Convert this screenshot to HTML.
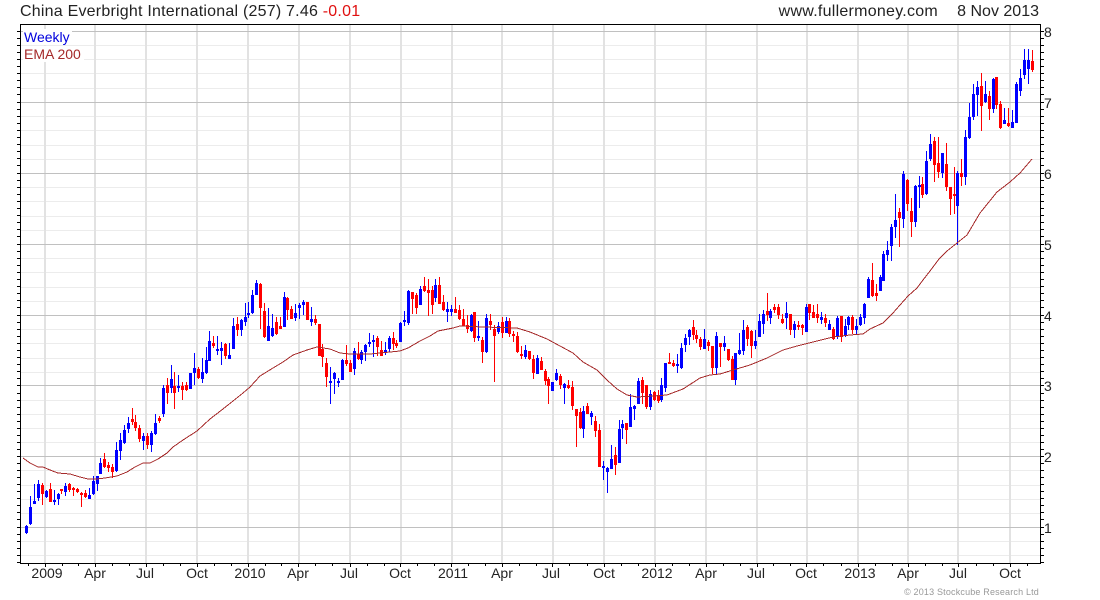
<!DOCTYPE html>
<html><head><meta charset="utf-8"><style>
html,body{margin:0;padding:0;background:#fff}
svg{display:block}
text{font-family:"Liberation Sans",Arial,sans-serif}
</style></head><body>
<svg xmlns="http://www.w3.org/2000/svg" width="1100" height="600" viewBox="0 0 1100 600">
<rect width="1100" height="600" fill="#fff"/>
<g shape-rendering="crispEdges" fill="none">
<path stroke="#ececec" d="M21 45.5H1040M21 59.5H1040M21 73.5H1040M21 88.5H1040M21 116.5H1040M21 130.5H1040M21 145.5H1040M21 159.5H1040M21 187.5H1040M21 201.5H1040M21 216.5H1040M21 230.5H1040M21 258.5H1040M21 272.5H1040M21 287.5H1040M21 301.5H1040M21 329.5H1040M21 343.5H1040M21 358.5H1040M21 372.5H1040M21 400.5H1040M21 414.5H1040M21 428.5H1040M21 442.5H1040M21 470.5H1040M21 485.5H1040M21 499.5H1040M21 513.5H1040M21 541.5H1040M21 555.5H1040"/>
<path stroke="#e2e2e2" stroke-width="2" d="M45 25V563M95 25V563M146 25V563M197 25V563M248 25V563M299 25V563M350 25V563M401 25V563M452 25V563M502 25V563M553 25V563M604 25V563M655 25V563M706 25V563M757 25V563M807 25V563M858 25V563M908 25V563M958 25V563M1010 25V563"/>
<path stroke="#c0c0c0" d="M21 31.5H1040M21 102.5H1040M21 173.5H1040M21 244.5H1040M21 315.5H1040M21 385.5H1040M21 456.5H1040M21 527.5H1040"/>
</g>
<rect x="23" y="29" width="49" height="16" fill="#fff"/>
<rect x="23" y="46" width="61" height="16" fill="#fff"/>
<g shape-rendering="crispEdges" fill="none" stroke="#ff0000">
<path stroke-width="1" d="M42.5 483V505M50.5 483V502M61.5 489V494M69.5 483V492M73.5 487V496M77.5 488V493M81.5 492V507M85.5 490V498M104.5 453V468M108.5 462V472M112.5 464V478M132.5 408V425M135.5 415V431M139.5 425V442M147.5 433V449M159.5 416V423M167.5 378V404M174.5 372V409M182.5 382V400M186.5 382V391M198.5 367V379M213.5 336V348M225.5 343V359M237.5 317V336M260.5 283V329M264.5 303V338M276.5 317V335M280.5 317V329M287.5 297V320M291.5 306V319M307.5 302V320M315.5 315V325M319.5 324V356M322.5 344V367M326.5 358V387M346.5 345V366M350.5 360V372M358.5 342V360M377.5 336V356M381.5 341V356M393.5 332V350M396.5 340V348M412.5 292V314M416.5 293V314M424.5 277V292M428.5 279V316M432.5 286V314M439.5 277V304M443.5 295V311M455.5 297V313M459.5 305V320M463.5 309V326M467.5 315V333M474.5 312V342M482.5 337V363M490.5 314V330M494.5 325V382M502.5 317V338M509.5 318V337M513.5 331V342M517.5 332V353M521.5 346V359M529.5 351V360M533.5 355V379M541.5 357V370M545.5 369V385M548.5 377V404M560.5 374V389M568.5 380V389M572.5 381V410M576.5 409V447M580.5 408V429M587.5 403V414M595.5 416V437M599.5 424V467M615.5 447V475M626.5 423V444M642.5 377V404M646.5 385V409M654.5 391V401M658.5 390V403M669.5 353V364M673.5 360V367M693.5 320V340M696.5 330V343M700.5 337V350M708.5 340V351M712.5 346V374M720.5 343V367M728.5 349V361M732.5 356V380M747.5 325V346M751.5 330V358M767.5 293V321M774.5 304V313M778.5 304V319M782.5 314V324M790.5 314V335M798.5 321V330M802.5 324V335M809.5 304V320M813.5 305V318M817.5 304V323M825.5 314V327M833.5 327V340M841.5 316V342M852.5 315V334M872.5 263V297M876.5 284V301M899.5 208V247M907.5 179V211M911.5 198V237M922.5 177V198M934.5 137V182M938.5 137V178M946.5 143V191M950.5 187V215M954.5 167V214M961.5 159V186M981.5 73V131M989.5 91V120M996.5 77V109M1000.5 101V129M1008.5 108V127M1032.5 50V72"/>
<path stroke-width="3" d="M42.5 485V494M50.5 489V502M61.5 489V491M69.5 484V490M73.5 488V490M77.5 489V492M81.5 493V495M85.5 493V497M104.5 459V467M108.5 465V468M112.5 467V472M132.5 419V422M135.5 422V428M139.5 428V439M147.5 436V445M159.5 418V421M167.5 385V393M174.5 386V393M182.5 386V390M186.5 385V390M198.5 369V378M213.5 343V346M225.5 344V356M237.5 324V330M260.5 284V308M264.5 311V337M276.5 322V334M280.5 326V329M287.5 298V310M291.5 309V319M307.5 302V320M315.5 319V323M319.5 324V356M322.5 349V357M326.5 363V377M346.5 360V364M350.5 363V372M358.5 354V359M377.5 338V347M381.5 350V356M393.5 338V344M396.5 343V346M412.5 292V299M416.5 295V308M424.5 286V291M428.5 290V293M432.5 290V305M439.5 285V304M443.5 302V310M455.5 309V313M459.5 310V319M463.5 319V326M467.5 325V329M474.5 312V338M482.5 340V352M490.5 321V325M494.5 329V336M502.5 322V333M509.5 321V334M513.5 334V336M517.5 336V352M521.5 354V356M529.5 351V359M533.5 359V373M541.5 361V370M545.5 371V381M548.5 379V386M560.5 376V385M568.5 385V388M572.5 387V406M576.5 409V416M580.5 412V428M587.5 406V414M595.5 421V431M599.5 430V467M615.5 455V465M626.5 423V430M642.5 380V393M646.5 385V407M654.5 392V400M658.5 396V401M669.5 362V364M673.5 363V366M693.5 327V335M696.5 335V339M700.5 339V347M708.5 342V346M712.5 346V368M720.5 343V347M728.5 349V360M732.5 359V380M747.5 327V339M751.5 331V346M767.5 311V315M774.5 307V310M778.5 307V315M782.5 319V323M790.5 314V330M798.5 325V327M802.5 325V328M809.5 304V313M813.5 312V318M817.5 314V318M825.5 318V323M833.5 329V339M841.5 316V337M852.5 317V330M872.5 280V296M876.5 293V296M899.5 212V218M907.5 180V204M911.5 211V222M922.5 184V195M934.5 141V165M938.5 163V172M946.5 164V187M950.5 187V199M954.5 194V196M961.5 173V177M981.5 86V106M989.5 96V109M996.5 77V105M1000.5 104V128M1008.5 123V126M1032.5 61V70"/>
</g>
<g shape-rendering="crispEdges" fill="none" stroke="#0000ff">
<path stroke-width="1" d="M26.5 525V534M30.5 496V525M34.5 484V504M38.5 480V501M46.5 490V498M54.5 490V505M58.5 493V505M65.5 483V496M89.5 488V499M93.5 476V495M97.5 476V491M100.5 458V474M116.5 442V472M120.5 433V460M124.5 425V444M128.5 417V433M143.5 433V450M151.5 431V452M155.5 414V435M163.5 385V417M171.5 365V393M178.5 375V392M190.5 373V389M194.5 353V385M202.5 358V383M206.5 347V374M209.5 331V361M217.5 336V355M221.5 342V365M229.5 343V359M233.5 318V349M241.5 319V336M245.5 303V326M248.5 302V318M252.5 290V314M256.5 280V295M268.5 308V341M272.5 314V337M284.5 292V327M295.5 304V321M299.5 303V319M303.5 300V315M311.5 307V326M330.5 367V404M334.5 372V394M338.5 378V387M342.5 359V380M354.5 348V375M361.5 350V364M365.5 344V361M369.5 333V347M373.5 335V357M385.5 342V355M389.5 336V352M400.5 322V342M404.5 311V326M408.5 290V325M420.5 286V305M435.5 279V302M447.5 302V322M451.5 305V316M471.5 314V332M478.5 321V341M486.5 314V353M498.5 322V334M506.5 317V333M525.5 345V359M537.5 355V374M552.5 382V391M556.5 369V381M564.5 383V404M583.5 406V438M591.5 411V425M603.5 461V480M607.5 467V493M611.5 445V469M619.5 420V463M622.5 420V439M630.5 394V427M634.5 405V420M638.5 378V404M650.5 390V410M661.5 378V402M665.5 363V392M677.5 354V373M681.5 343V369M685.5 334V352M689.5 329V345M704.5 329V349M716.5 332V374M724.5 336V351M735.5 353V385M739.5 333V355M743.5 320V355M755.5 330V349M759.5 314V337M763.5 310V334M770.5 309V324M786.5 302V329M794.5 321V338M806.5 304V332M821.5 312V324M829.5 320V330M837.5 316V339M845.5 319V337M848.5 316V330M856.5 319V335M860.5 314V326M864.5 303V324M868.5 277V298M880.5 275V291M883.5 251V281M887.5 241V261M891.5 224V261M895.5 194V238M903.5 171V228M915.5 185V227M919.5 176V208M926.5 151V195M930.5 134V161M942.5 153V178M957.5 171V245M965.5 130V185M969.5 103V139M973.5 84V120M977.5 81V116M985.5 81V103M993.5 78V113M1004.5 108V124M1012.5 110V128M1016.5 82V123M1020.5 69V96M1024.5 49V79M1028.5 49V84"/>
<path stroke-width="3" d="M26.5 526V533M30.5 507V524M34.5 501V504M38.5 484V498M46.5 491V497M54.5 500V502M58.5 494V499M65.5 486V492M89.5 495V499M93.5 481V494M97.5 476V484M100.5 463V474M116.5 450V471M120.5 440V451M124.5 430V443M128.5 423V429M143.5 436V441M151.5 433V445M155.5 423V434M163.5 388V414M171.5 379V388M178.5 386V388M190.5 373V389M194.5 368V373M202.5 372V379M206.5 360V373M209.5 341V361M217.5 349V351M221.5 348V351M229.5 355V359M233.5 326V349M241.5 320V330M245.5 317V322M248.5 313V315M252.5 295V313M256.5 283V295M268.5 326V341M272.5 328V336M284.5 297V327M295.5 313V318M299.5 305V308M303.5 302V305M311.5 319V322M330.5 381V383M334.5 373V379M338.5 381V383M342.5 360V380M354.5 351V369M361.5 352V360M365.5 345V352M369.5 342V344M373.5 340V342M385.5 350V352M389.5 338V349M400.5 323V342M404.5 320V322M408.5 291V323M420.5 289V305M435.5 285V298M447.5 309V312M451.5 309V312M471.5 315V331M478.5 336V338M486.5 318V352M498.5 326V332M506.5 321V333M525.5 350V357M537.5 358V374M552.5 382V391M556.5 373V380M564.5 384V388M583.5 411V429M591.5 413V417M603.5 466V468M607.5 468V472M611.5 459V469M619.5 429V463M622.5 424V428M630.5 407V427M634.5 406V409M638.5 381V404M650.5 394V407M661.5 385V400M665.5 363V388M677.5 364V366M681.5 348V368M685.5 338V345M689.5 330V337M704.5 339V349M716.5 336V368M724.5 343V347M735.5 353V380M739.5 350V354M743.5 330V351M755.5 341V346M759.5 321V337M763.5 314V324M770.5 311V318M786.5 313V318M794.5 324V330M806.5 307V332M821.5 317V320M829.5 324V330M837.5 318V337M845.5 326V336M848.5 317V325M856.5 326V330M860.5 317V325M864.5 304V318M868.5 279V298M880.5 277V291M883.5 254V281M887.5 250V255M891.5 227V246M895.5 220V227M903.5 174V219M915.5 186V222M919.5 185V187M926.5 161V194M930.5 144V159M942.5 153V173M957.5 173V206M965.5 137V177M969.5 117V138M973.5 94V117M977.5 87V95M985.5 94V102M993.5 79V109M1004.5 120V124M1012.5 122V128M1016.5 84V123M1020.5 78V91M1024.5 60V75M1028.5 60V69"/>
</g>
<polyline fill="none" stroke="#a52a2a" stroke-width="1" shape-rendering="crispEdges" points="23,458 30,463 38,467 43,467 50,470 58,473 70,474 80,477 88,479 97,479 105,478 117,476 127,472 135,467 143,463 150,463 158,459 167,453 173,447 183,440 197,431 210,419 223,409 243,393 250,387 260,376 273,368 283,362 293,355 307,350 317,347 330,349 340,353 350,354 370,354 390,352 400,351 408,348 420,341 430,336 438,331 453,328 460,326 483,327 517,328 530,332 547,339 560,346 573,353 583,362 597,370 607,380 617,389 627,395 637,397 653,396 667,395 683,389 700,378 710,375 720,374 733,370 750,365 767,358 783,350 797,346 813,342 833,337 850,335 863,334 870,329 883,323 893,313 900,305 908,296 917,288 923,280 930,271 939,259 947,251 957,243 967,235 980,213 997,192 1010,182 1020,173 1032,159"/>
<g shape-rendering="crispEdges" fill="none" stroke="#000">
<path stroke-width="1" d="M20.5 24.5H1040.5V563.5H20.5Z"/>
<path d="M17 31.5H20M17 38.5H20M17 45.5H20M17 52.5H20M17 59.5H20M17 66.5H20M17 73.5H20M17 80.5H20M17 87.5H20M17 94.5H20M17 102.5H20M17 109.5H20M17 116.5H20M17 123.5H20M17 130.5H20M17 137.5H20M17 144.5H20M17 151.5H20M17 158.5H20M17 165.5H20M17 173.5H20M17 180.5H20M17 187.5H20M17 194.5H20M17 201.5H20M17 208.5H20M17 215.5H20M17 222.5H20M17 229.5H20M17 236.5H20M17 244.5H20M17 251.5H20M17 258.5H20M17 265.5H20M17 272.5H20M17 279.5H20M17 286.5H20M17 293.5H20M17 300.5H20M17 307.5H20M17 315.5H20M17 322.5H20M17 329.5H20M17 336.5H20M17 343.5H20M17 350.5H20M17 357.5H20M17 364.5H20M17 371.5H20M17 378.5H20M17 385.5H20M17 393.5H20M17 400.5H20M17 407.5H20M17 414.5H20M17 421.5H20M17 428.5H20M17 435.5H20M17 442.5H20M17 449.5H20M17 456.5H20M17 463.5H20M17 470.5H20M17 477.5H20M17 484.5H20M17 491.5H20M17 498.5H20M17 505.5H20M17 512.5H20M17 519.5H20M17 527.5H20M17 534.5H20M17 541.5H20M17 548.5H20M17 555.5H20M17 562.5H20"/>
<path d="M1041 31.5H1044M1041 38.5H1044M1041 45.5H1044M1041 52.5H1044M1041 59.5H1044M1041 66.5H1044M1041 73.5H1044M1041 80.5H1044M1041 87.5H1044M1041 94.5H1044M1041 102.5H1044M1041 109.5H1044M1041 116.5H1044M1041 123.5H1044M1041 130.5H1044M1041 137.5H1044M1041 144.5H1044M1041 151.5H1044M1041 158.5H1044M1041 165.5H1044M1041 173.5H1044M1041 180.5H1044M1041 187.5H1044M1041 194.5H1044M1041 201.5H1044M1041 208.5H1044M1041 215.5H1044M1041 222.5H1044M1041 229.5H1044M1041 236.5H1044M1041 244.5H1044M1041 251.5H1044M1041 258.5H1044M1041 265.5H1044M1041 272.5H1044M1041 279.5H1044M1041 286.5H1044M1041 293.5H1044M1041 300.5H1044M1041 307.5H1044M1041 315.5H1044M1041 322.5H1044M1041 329.5H1044M1041 336.5H1044M1041 343.5H1044M1041 350.5H1044M1041 357.5H1044M1041 364.5H1044M1041 371.5H1044M1041 378.5H1044M1041 385.5H1044M1041 393.5H1044M1041 400.5H1044M1041 407.5H1044M1041 414.5H1044M1041 421.5H1044M1041 428.5H1044M1041 435.5H1044M1041 442.5H1044M1041 449.5H1044M1041 456.5H1044M1041 463.5H1044M1041 470.5H1044M1041 477.5H1044M1041 484.5H1044M1041 491.5H1044M1041 498.5H1044M1041 505.5H1044M1041 512.5H1044M1041 519.5H1044M1041 527.5H1044M1041 534.5H1044M1041 541.5H1044M1041 548.5H1044M1041 555.5H1044M1041 562.5H1044"/>
<path d="M28.5 564V566M45.5 564V567M62.5 564V566M78.5 564V566M95.5 564V567M112.5 564V566M129.5 564V566M146.5 564V567M163.5 564V566M180.5 564V566M197.5 564V567M214.5 564V566M231.5 564V566M248.5 564V567M265.5 564V566M281.5 564V566M298.5 564V567M315.5 564V566M332.5 564V566M350.5 564V567M367.5 564V566M384.5 564V566M400.5 564V567M417.5 564V566M434.5 564V566M451.5 564V567M468.5 564V566M485.5 564V566M502.5 564V567M519.5 564V566M536.5 564V566M552.5 564V567M569.5 564V566M587.5 564V566M604.5 564V567M621.5 564V566M638.5 564V566M655.5 564V567M672.5 564V566M689.5 564V566M706.5 564V567M723.5 564V566M740.5 564V566M757.5 564V567M773.5 564V566M790.5 564V566M806.5 564V567M823.5 564V566M841.5 564V566M858.5 564V567M875.5 564V566M892.5 564V566M908.5 564V567M925.5 564V566M942.5 564V566M958.5 564V567M976.5 564V566M993.5 564V566M1010.5 564V567M1027.5 564V566"/>
</g>
<text x="20" y="16" font-size="16" fill="#222" letter-spacing=".22">China Everbright International (257) 7.46 <tspan fill="#e01010">-0.01</tspan></text>
<text x="938" y="16" font-size="16" fill="#222" text-anchor="end" letter-spacing=".26">www.fullermoney.com</text>
<text x="1039" y="16" font-size="16" fill="#222" text-anchor="end">8 Nov 2013</text>
<text x="24" y="42" font-size="14" fill="#0000dd">Weekly</text>
<text x="24" y="59" font-size="14" fill="#a52a2a">EMA 200</text>
<g font-size="14" fill="#222">
<text x="1044" y="37">8</text><text x="1044" y="108">7</text><text x="1044" y="179">6</text><text x="1044" y="250">5</text><text x="1044" y="321">4</text><text x="1044" y="391">3</text><text x="1044" y="462">2</text><text x="1044" y="533">1</text>
</g>
<g font-size="14" fill="#222" text-anchor="middle">
<text x="47" y="578">2009</text><text x="95" y="578">Apr</text><text x="145" y="578">Jul</text><text x="197" y="578">Oct</text><text x="250" y="578">2010</text><text x="298" y="578">Apr</text><text x="349" y="578">Jul</text><text x="400" y="578">Oct</text><text x="453" y="578">2011</text><text x="502" y="578">Apr</text><text x="551" y="578">Jul</text><text x="604" y="578">Oct</text><text x="657" y="578">2012</text><text x="706" y="578">Apr</text><text x="756" y="578">Jul</text><text x="806" y="578">Oct</text><text x="860" y="578">2013</text><text x="908" y="578">Apr</text><text x="958" y="578">Jul</text><text x="1010" y="578">Oct</text>
</g>
<text x="1039" y="595" font-size="9" fill="#999" text-anchor="end" letter-spacing=".18">© 2013 Stockcube Research Ltd</text>
</svg>
</body></html>
